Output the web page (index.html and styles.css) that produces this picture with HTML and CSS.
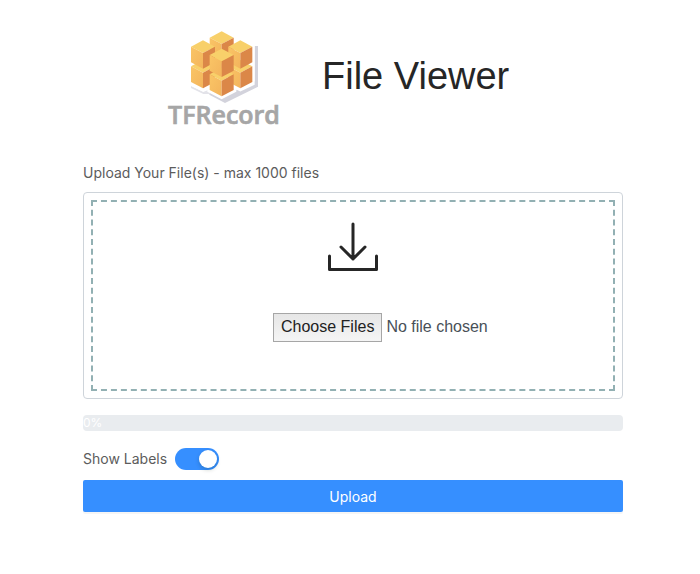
FILE: index.html
```html
<!DOCTYPE html>
<html lang="en">
<head>
  <meta charset="utf-8">
  <meta name="viewport" content="width=device-width, initial-scale=1">
  <title>TFRecord File Viewer</title>
  <link rel="stylesheet" href="styles.css">
</head>
<body>
  <main class="container">
    <header class="header">
      <svg class="logo" viewBox="0 0 390 345" role="img" aria-label="TFRecord">
        <defs>
          <linearGradient id="face" x1="0" y1="0" x2="1" y2="1">
            <stop offset="0" stop-color="#fac566"/>
            <stop offset="1" stop-color="#f3b45c"/>
          </linearGradient>
          <g id="cube">
            <path fill="#f8d06a" d="M0 0 36 19 0 38-36 19z"/>
            <path fill="url(#face)" d="M-36 19 0 38V85L-36 66z"/>
            <path fill="#db8748" d="M36 19 0 38V85L36 66z"/>
          </g>
        </defs>
        <path fill="#d3d3dc" d="M284 78h10V200L195 249 148 224V212L185 228 284 184z"/>
        <path fill="#e3e3e9" d="M93 198 130 216 146 209 150 222 130 222 93 204z"/>
        <path fill="#fff" stroke="#fff" stroke-width="14" d="M93 80 185 34 277 80V190L241 207 222 198V211L185 230 149 211V198L129 207 93 190z"/>
        <use href="#cube" x="185" y="92"/>
        <use href="#cube" x="129" y="120"/>
        <use href="#cube" x="241" y="120"/>
        <use href="#cube" x="185" y="34"/>
        <use href="#cube" x="129" y="61"/>
        <use href="#cube" x="241" y="61"/>
        <use href="#cube" x="185" y="144"/>
        <use href="#cube" x="185" y="86"/>
        <text class="logo-text" x="192" y="311" text-anchor="middle">TFRecord</text>
      </svg>
      <h1 class="title">File Viewer</h1>
    </header>

    <form class="form">
      <label class="label" for="files">Upload Your File(s) - max 1000 files</label>
      <div class="upload">
        <div class="dropzone">
          <svg class="download" viewBox="0 0 50 50" aria-hidden="true">
            <path d="M25 2V37M13 25 25 37 37 25M1.500 34V47.500H48.500V34"/>
          </svg>
          <input class="files" id="files" type="file" multiple>
        </div>
      </div>
      <div class="progress" role="progressbar" aria-label="Upload progress" aria-valuenow="0" aria-valuemin="0" aria-valuemax="100">0%</div>
      <div class="option">
        <label class="option-label" for="labels">Show Labels</label>
        <input class="switch" id="labels" type="checkbox" role="switch" checked>
      </div>
      <button class="submit" type="button">Upload</button>
    </form>
  </main>
</body>
</html>
```
FILE: styles.css
```css
* {
  box-sizing: border-box;
}

body {
  margin: 0;
  padding: 20px 0 48px 6px;
  background: #fff;
  color: #212529;
  font-family: Inter, "Liberation Sans", sans-serif;
  font-size: 16px;
  line-height: 24px;
}

.container {
  max-width: 540px;
  margin: 0 auto;
}

.header {
  display: flex;
  gap: 32px;
  padding-left: 77px;
}

.logo {
  width: 130px;
  flex: none;
}

.logo-text {
  fill: #a6a6a6;
  stroke: #a6a6a6;
  stroke-width: 2;
  font-family: "Open Sans", sans-serif;
  font-size: 75px;
  font-weight: 600;
}

.title {
  margin: 32px 0 0;
  color: #262626;
  font-family: "Liberation Sans", sans-serif;
  font-size: 38px;
  font-weight: 400;
  line-height: 48px;
}

.form {
  display: flex;
  flex-direction: column;
  margin-top: 28px;
}

.label,
.option-label {
  color: #5c5c5c;
  font-size: 14px;
  line-height: 20px;
}

.upload {
  margin-top: 9px;
  padding: 7px;
  border: 1px solid #ced4da;
  border-radius: 4px;
}

.dropzone {
  display: flex;
  flex-direction: column;
  align-items: center;
  height: 191px;
  padding-top: 20px;
  border: 2px dashed #92b0b3;
}

.download {
  width: 50px;
  height: 50px;
  fill: none;
  stroke: #262626;
  stroke-width: 3;
  stroke-linecap: round;
  stroke-linejoin: round;
}

.files {
  width: 240px;
  margin: 41px 0 0 80px;
  color: #495057;
  font-family: "Liberation Sans", sans-serif;
  font-size: 16px;
}

.files::file-selector-button {
  margin-right: 4px;
  padding: 4px 7px 5px;
  border: 1px solid #a6a6a6;
  border-radius: 0;
  background: linear-gradient(#e6e6e6, #f5f5f5);
  color: #212121;
  font: inherit;
}

.progress {
  height: 16px;
  margin-top: 16px;
  border-radius: 4px;
  background: #e9ecef;
  color: #fff;
  font-size: 12px;
  line-height: 16px;
}

.option {
  display: flex;
  align-items: center;
  gap: 8px;
  margin-top: 17px;
}

.switch {
  width: 44px;
  height: 22px;
  margin: 0;
  padding: 2px;
  border-radius: 11px;
  background: #bfbfbf;
  appearance: none;
}

.switch::before {
  content: "";
  display: block;
  width: 18px;
  height: 18px;
  border-radius: 50%;
  background: #fff;
  box-shadow: 0 2px 4px rgba(0, 35, 11, 0.2);
}

.switch:checked {
  background: #368fff;
}

.switch:checked::before {
  margin-left: auto;
}

.submit {
  height: 32px;
  margin-top: 10px;
  padding: 0;
  border: 0;
  border-radius: 2px;
  background: #368fff;
  box-shadow: 0 2px 0 rgba(0, 0, 0, 0.04);
  color: #fff;
  font-family: inherit;
  font-size: 14px;
}
```
